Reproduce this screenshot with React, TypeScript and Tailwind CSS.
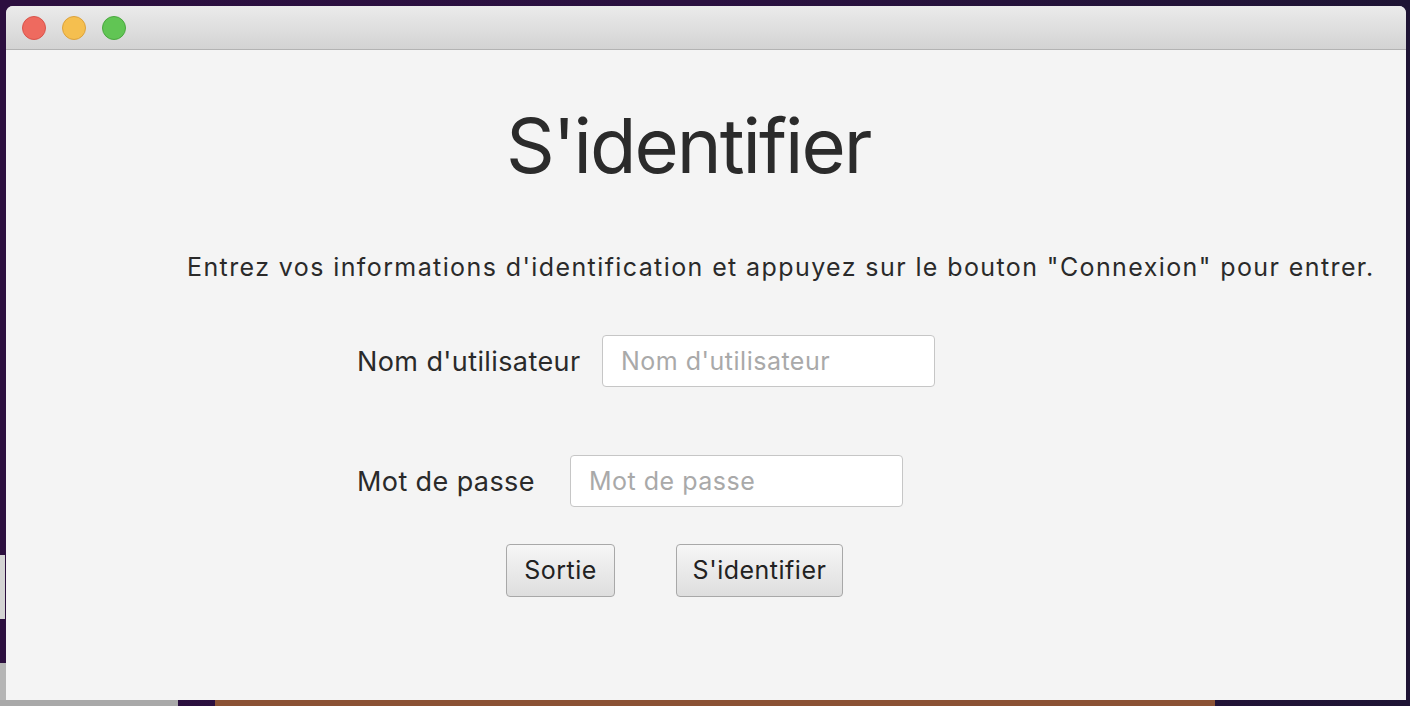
const font = { fontFamily: "Inter, 'Noto Sans', sans-serif" };

function TrafficLights() {
  return (
    <div className="flex items-center gap-4 pl-4">
      <span className="block h-6 w-6 rounded-full border border-[#d9544b] bg-[#ee6a5f]" />
      <span className="block h-6 w-6 rounded-full border border-[#dca23c] bg-[#f5bf4f]" />
      <span className="block h-6 w-6 rounded-full border border-[#4aa83f] bg-[#61c554]" />
    </div>
  );
}

function Field({ label, labelWidth, placeholder }: { label: string; labelWidth: string; placeholder: string }) {
  return (
    <div className="flex items-center pl-[351px]">
      <span className={`${labelWidth} shrink-0 text-[27px] leading-none tracking-[0.4px] text-[#2a2a2a]`}>{label}</span>
      <input
        placeholder={placeholder}
        className="h-[52px] w-[333px] rounded-[4px] border border-[#c6c6c6] bg-white px-[18px] text-[25px] tracking-[0.5px] text-[#2a2a2a] outline-none placeholder:text-[#a9a9a9]"
        style={font}
      />
    </div>
  );
}

function Button({ children, className }: { children: string; className?: string }) {
  return (
    <button
      className={`flex h-[53px] items-center justify-center rounded-[4px] border border-[#a8a8a8] bg-gradient-to-b from-[#f6f6f6] to-[#dedede] text-[25px] leading-none tracking-[0.5px] text-[#222] ${className ?? ""}`}
      style={font}
    >
      {children}
    </button>
  );
}

export default function App() {
  return (
    <div className="relative h-[706px] w-[1410px] overflow-hidden bg-gradient-to-r from-[#2c0f3f] via-[#2a1040] to-[#1e1434]" style={font}>
      {/* bits of the desktop peeking out */}
      <div className="absolute left-0 top-[555px] h-[64px] w-[5px] bg-[#d4d4d4]" />
      <div className="absolute left-0 top-[663px] h-[43px] w-[6px] bg-[#b5b5b5]" />
      <div className="absolute bottom-0 left-0 h-[6px] w-[178px] bg-[#a9a9a9]" />
      <div className="absolute bottom-0 left-[215px] h-[6px] w-[1000px] bg-[#8b5234]" />

      <div className="absolute left-[6px] top-[6px] flex h-[694px] w-[1400px] flex-col overflow-hidden rounded-t-[7px] bg-[#f4f4f4]">
        <div className="flex h-[44px] shrink-0 items-center border-b border-[#b3b3b3] bg-gradient-to-b from-[#ebebeb] to-[#d3d3d3]">
          <TrafficLights />
        </div>

        <div className="flex flex-col">
          <h1 className="mt-[57px] pl-[500px] text-[76px] font-normal leading-none tracking-[-2px] text-[#2b2b2b]">S'identifier</h1>

          <p className="mt-[72px] pl-[181px] text-[25px] leading-none tracking-[1.4px] text-[#2a2a2a]">
            Entrez vos informations d'identification et appuyez sur le bouton "Connexion" pour entrer.
          </p>

          <div className="mt-[55px]">
            <Field label="Nom d'utilisateur" labelWidth="w-[245px]" placeholder="Nom d'utilisateur" />
          </div>
          <div className="mt-[68px]">
            <Field label="Mot de passe" labelWidth="w-[213px]" placeholder="Mot de passe" />
          </div>

          <div className="mt-[37px] flex pl-[500px]">
            <Button className="w-[109px]">Sortie</Button>
            <Button className="ml-[61px] w-[167px]">S'identifier</Button>
          </div>
        </div>
      </div>
    </div>
  );
}
